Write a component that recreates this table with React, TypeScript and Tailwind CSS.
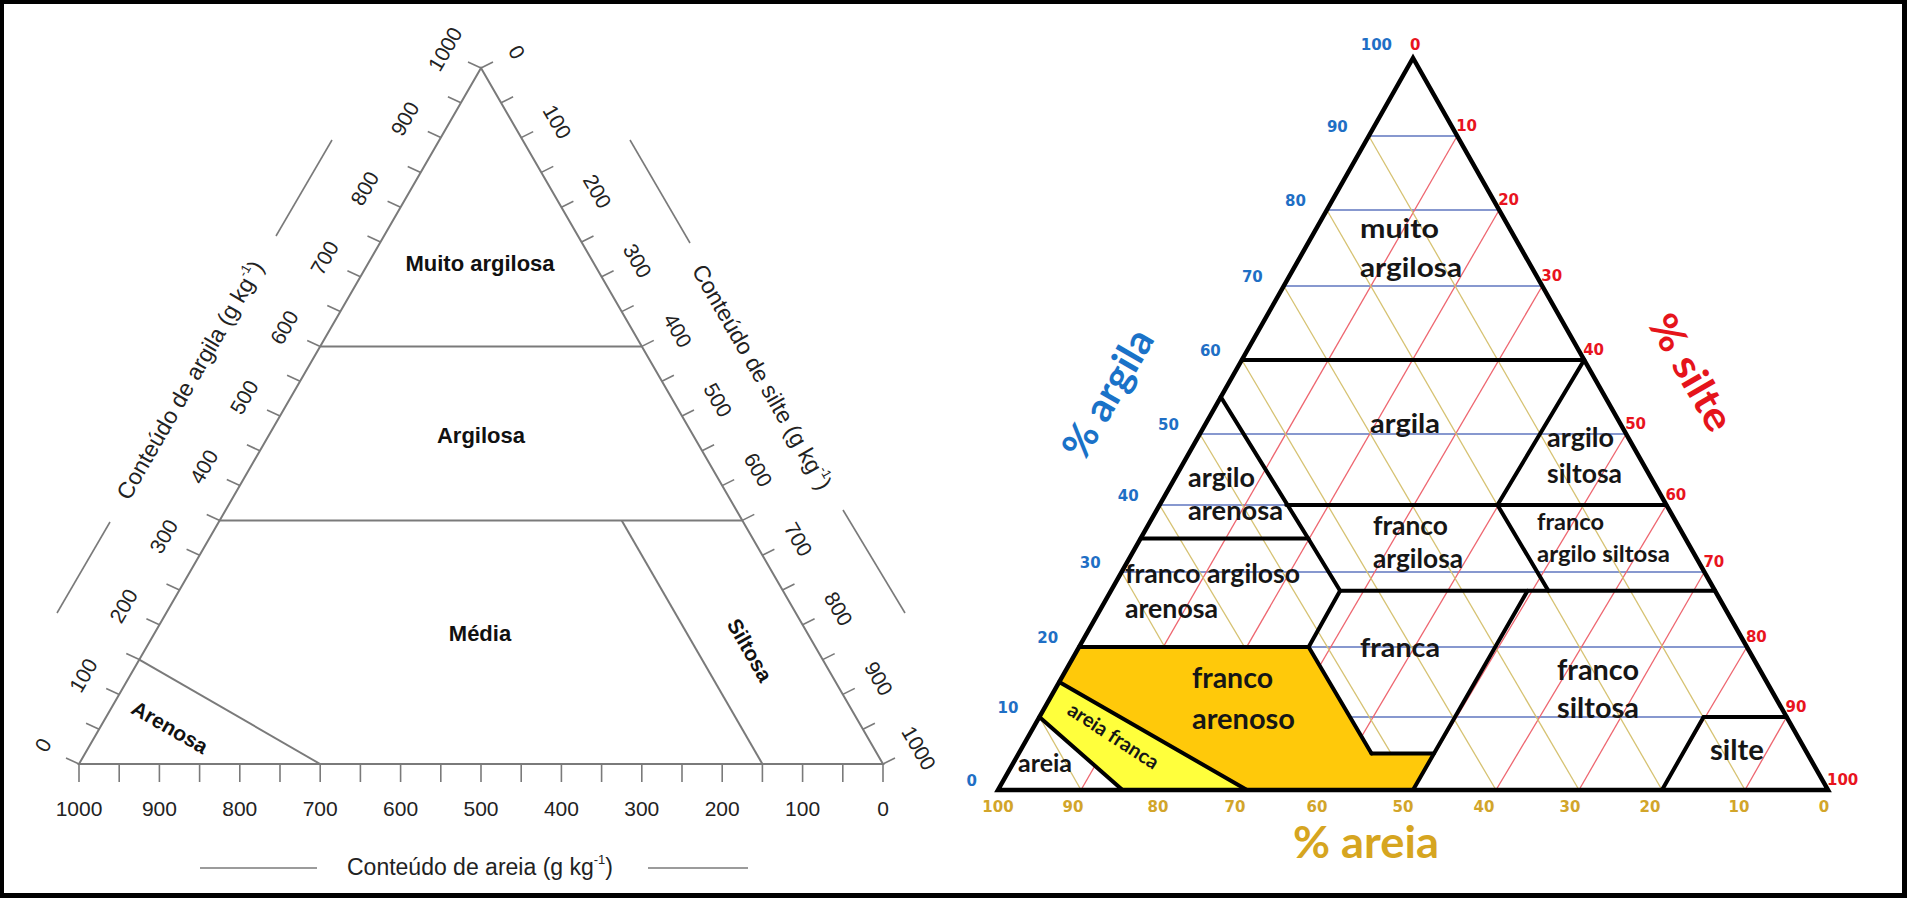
type Pt = [number, number];

// ---------- left chart (g/kg) ----------
const leftSide = (v: number): Pt => [79 + v * 0.402, 764 - v * 0.696];
const rightSide = (v: number): Pt => [481 + v * 0.402, 68 + v * 0.696];
const baseX = (v: number) => 883 - v * 0.804;

const steps = Array.from({ length: 21 }, (_, i) => i * 50);
const hundreds = Array.from({ length: 11 }, (_, i) => i * 100);

const grey = '#7a7a7a';
const sans = '"Liberation Sans", Arial, sans-serif';

function LeftChart() {
  return (
    <svg viewBox="4 4 949 889" className="w-[949px] h-[889px] shrink-0" fontFamily={sans}>
      {/* frame */}
      <polygon points="79,764 481,68 883,764" fill="none" stroke={grey} strokeWidth={2} />

      {/* ticks */}
      {steps.map((v) => {
        const [x, y] = leftSide(v);
        return <line key={'lt' + v} x1={x} y1={y} x2={x - 13} y2={y - 6} stroke={grey} strokeWidth={1.6} />;
      })}
      {steps.map((v) => {
        const [x, y] = rightSide(v);
        return <line key={'rt' + v} x1={x} y1={y} x2={x + 12} y2={y - 6} stroke={grey} strokeWidth={1.6} />;
      })}
      {steps.map((v) => (
        <line key={'bt' + v} x1={baseX(v)} y1={764} x2={baseX(v)} y2={782} stroke={grey} strokeWidth={1.6} />
      ))}

      {/* class boundaries */}
      <line x1={320.2} y1={346.4} x2={641.8} y2={346.4} stroke={grey} strokeWidth={2} />
      <line x1={219.7} y1={520.4} x2={742.3} y2={520.4} stroke={grey} strokeWidth={2} />
      <line x1={621.7} y1={520.4} x2={762.4} y2={764} stroke={grey} strokeWidth={2} />
      <line x1={139.3} y1={659.6} x2={320.2} y2={764} stroke={grey} strokeWidth={2} />

      {/* axis numbers */}
      {hundreds.map((v) => {
        const [x, y] = leftSide(v);
        const cx = x - 36;
        const cy = y - 19;
        return (
          <text key={'ln' + v} x={cx} y={cy} fontSize={21} fill="#222" textAnchor="middle" dominantBaseline="central" transform={`rotate(-60 ${cx} ${cy})`}>
            {v}
          </text>
        );
      })}
      {hundreds.map((v) => {
        const [x, y] = rightSide(v);
        const cx = x + 36;
        const cy = y - 16;
        return (
          <text key={'rn' + v} x={cx} y={cy} fontSize={21} fill="#222" textAnchor="middle" dominantBaseline="central" transform={`rotate(60 ${cx} ${cy})`}>
            {v}
          </text>
        );
      })}
      {hundreds.map((v) => (
        <text key={'bn' + v} x={baseX(v)} y={808} fontSize={21} fill="#222" textAnchor="middle" dominantBaseline="central">
          {v}
        </text>
      ))}

      {/* axis titles */}
      <text x={190} y={380} fontSize={23} fill="#222" textAnchor="middle" dominantBaseline="central" transform="rotate(-60 190 380)">
        Conteúdo de argila (g kg<tspan fontSize={13} dy={-8}>-1</tspan><tspan dy={8}>)</tspan>
      </text>
      <text x={762} y={377} fontSize={23} fill="#222" textAnchor="middle" dominantBaseline="central" transform="rotate(60 762 377)">
        Conteúdo de silte (g kg<tspan fontSize={13} dy={-8}>-1</tspan><tspan dy={8}>)</tspan>
      </text>
      <text x={480} y={867} fontSize={23} fill="#222" textAnchor="middle" dominantBaseline="central">
        Conteúdo de areia (g kg<tspan fontSize={13} dy={-8}>-1</tspan><tspan dy={8}>)</tspan>
      </text>

      {/* decorative dashes next to titles */}
      <line x1={276} y1={236} x2={332} y2={140} stroke={grey} strokeWidth={1.6} />
      <line x1={57} y1={613} x2={110} y2={522} stroke={grey} strokeWidth={1.6} />
      <line x1={630} y1={140} x2={690} y2={243} stroke={grey} strokeWidth={1.6} />
      <line x1={843} y1={510} x2={905} y2={613} stroke={grey} strokeWidth={1.6} />
      <line x1={200} y1={868} x2={317} y2={868} stroke={grey} strokeWidth={1.6} />
      <line x1={648} y1={868} x2={748} y2={868} stroke={grey} strokeWidth={1.6} />

      {/* class names */}
      <g fontWeight={700} fontSize={22} fill="#111" textAnchor="middle" dominantBaseline="central">
        <text x={480} y={263}>Muito argilosa</text>
        <text x={481} y={435}>Argilosa</text>
        <text x={480} y={633}>Média</text>
        <text x={750} y={650} fontSize={21} transform="rotate(60 750 650)">Siltosa</text>
        <text x={170} y={727} fontSize={21} transform="rotate(30 170 727)">Arenosa</text>
      </g>
    </svg>
  );
}

// ---------- right chart (%) ----------
const yTable = [790, 717, 647, 572, 505, 434, 360, 286, 210, 136, 58];
const Y = (c: number) => {
  const i = Math.min(9, Math.floor(c / 10));
  const f = (c - i * 10) / 10;
  return yTable[i] + (yTable[i + 1] - yTable[i]) * f;
};
const xLeft = (y: number) => 998 + (790 - y) * 0.567;
const xRight = (y: number) => 1828 - (790 - y) * 0.567;
// clay %, silt %
const P = (clay: number, silt: number): Pt => {
  const y = Y(clay);
  if (clay >= 100) return [1413, y];
  const xl = xLeft(y);
  const xr = xRight(y);
  return [xl + (silt / (100 - clay)) * (xr - xl), y];
};
const pts = (list: Pt[]) => list.map((p) => p.join(',')).join(' ');

const tens = [10, 20, 30, 40, 50, 60, 70, 80, 90];
const calibri = 'Lato, "Open Sans", sans-serif';
const numFont = '"DejaVu Sans", Verdana, sans-serif';

const borders: [Pt, Pt][] = [
  [P(60, 0), P(60, 40)],
  [P(55, 0), P(35, 20)],
  [P(35, 0), P(35, 20)],
  [P(40, 15), P(40, 60)],
  [P(60, 40), P(40, 40)],
  [P(35, 20), P(27.5, 27.5)],
  [P(27.5, 27.5), P(27.5, 72.5)],
  [P(40, 40), P(27.5, 52.5)],
  [P(27.5, 27.5), P(20, 27.5)],
  [P(20, 0), P(20, 27.5)],
  [P(20, 27.5), P(5, 42.5)],
  [P(5, 42.5), P(5, 50)],
  [P(27.5, 50), P(0, 50)],
  [P(10, 80), P(10, 90)],
  [P(10, 80), P(0, 80)],
  [P(15, 0), P(0, 30)],
  [P(10, 0), P(0, 15)],
];

const labels: { t: string; x: number; y: number; w: number; s: number }[] = [
  { t: 'muito', x: 1360, y: 238, w: 79, s: 27 },
  { t: 'argilosa', x: 1360, y: 277, w: 102, s: 27 },
  { t: 'argila', x: 1370, y: 433, w: 70, s: 27 },
  { t: 'argilo', x: 1188, y: 487, w: 67, s: 27 },
  { t: 'arenosa', x: 1188, y: 520, w: 95, s: 27 },
  { t: 'franco argiloso', x: 1125, y: 583, w: 175, s: 27 },
  { t: 'arenosa', x: 1125, y: 618, w: 93, s: 27 },
  { t: 'franco', x: 1373, y: 535, w: 75, s: 27 },
  { t: 'argilosa', x: 1373, y: 568, w: 90, s: 27 },
  { t: 'argilo', x: 1547, y: 447, w: 67, s: 27 },
  { t: 'siltosa', x: 1547, y: 483, w: 75, s: 27 },
  { t: 'franco', x: 1537, y: 530, w: 67, s: 23 },
  { t: 'argilo siltosa', x: 1537, y: 562, w: 133, s: 23 },
  { t: 'franca', x: 1360, y: 657, w: 80, s: 27 },
  { t: 'franco', x: 1192, y: 688, w: 81, s: 29 },
  { t: 'arenoso', x: 1192, y: 729, w: 103, s: 29 },
  { t: 'franco', x: 1557, y: 680, w: 82, s: 29 },
  { t: 'siltosa', x: 1557, y: 718, w: 82, s: 29 },
  { t: 'silte', x: 1710, y: 760, w: 54, s: 28 },
  { t: 'areia', x: 1018, y: 772, w: 54, s: 24 },
];

const sandLabelX = [1824, 1739, 1650, 1570, 1484, 1403, 1317, 1235, 1158, 1073, 998];

function RightChart() {
  const apex: Pt = [1413, 58];
  const bl: Pt = [998, 790];
  const br: Pt = [1828, 790];
  return (
    <svg viewBox="953 4 949 889" className="w-[949px] h-[889px] shrink-0">
      {/* grid */}
      {tens.map((c) => {
        const [a, b] = [P(c, 0), P(c, 100 - c)];
        return <line key={'gb' + c} x1={a[0]} y1={a[1]} x2={b[0]} y2={b[1]} stroke="#5f76bf" strokeWidth={1.3} />;
      })}
      {tens.map((t) => {
        const [a, b] = [P(0, t), P(100 - t, t)];
        return <line key={'gr' + t} x1={a[0]} y1={a[1]} x2={b[0]} y2={b[1]} stroke="#ee6670" strokeWidth={1.3} />;
      })}
      {tens.map((s) => {
        const [a, b] = [P(0, 100 - s), P(100 - s, 0)];
        return <line key={'gy' + s} x1={a[0]} y1={a[1]} x2={b[0]} y2={b[1]} stroke="#d6c272" strokeWidth={1.3} />;
      })}

      {/* filled classes */}
      <polygon
        points={pts([P(20, 0), P(20, 27.5), P(5, 42.5), P(5, 50), P(0, 50), P(0, 30), P(15, 0)])}
        fill="#ffc90a"
      />
      <polygon points={pts([P(15, 0), P(0, 30), P(0, 15), P(10, 0)])} fill="#ffff3c" />

      {/* boundaries */}
      {borders.map(([a, b], i) => (
        <line key={'bd' + i} x1={a[0]} y1={a[1]} x2={b[0]} y2={b[1]} stroke="#000" strokeWidth={4} strokeLinecap="round" />
      ))}
      <polygon points={pts([apex, bl, br])} fill="none" stroke="#000" strokeWidth={4.5} strokeLinejoin="miter" />

      {/* class names */}
      <g fontFamily={calibri} fontWeight={700} fill="#161616">
        {labels.map((l, i) => (
          <text key={'lb' + i} x={l.x} y={l.y} fontSize={l.s} textLength={l.w} lengthAdjust="spacingAndGlyphs">
            {l.t}
          </text>
        ))}
        <text x={1114} y={735} fontSize={20} textAnchor="middle" dominantBaseline="central" transform="rotate(33 1114 735)">
          areia franca
        </text>
      </g>

      {/* scale numbers */}
      <g fontFamily={numFont} fontWeight={700} fontSize={15}>
        {[0, ...tens, 100].map((c) => {
          const y = Y(c);
          return (
            <text key={'cl' + c} x={xLeft(y) - 21} y={c === 100 ? 50 : y - 4} fill="#1f6fc5" textAnchor="end">
              {c}
            </text>
          );
        })}
        {[0, ...tens, 100].map((t) => {
          const y = Y(100 - t);
          return (
            <text key={'sl' + t} x={t === 0 ? 1410 : xRight(y) - 1} y={t === 0 ? 50 : y - 5} fill="#e8141e">
              {t}
            </text>
          );
        })}
        {sandLabelX.map((x, i) => (
          <text key={'sd' + i} x={x} y={812} fill="#d2a52a" textAnchor="middle">
            {i * 10}
          </text>
        ))}
      </g>

      {/* axis titles */}
      <g fontFamily={calibri} fontWeight={700}>
        <text x={1107} y={393} fontSize={40} fill="#1a72c8" textAnchor="middle" dominantBaseline="central" textLength={142} lengthAdjust="spacingAndGlyphs" transform="rotate(-60 1107 393)">
          % argila
        </text>
        <text x={1692} y={372} fontSize={40} fill="#e5141b" textAnchor="middle" dominantBaseline="central" textLength={128} lengthAdjust="spacingAndGlyphs" transform="rotate(60 1692 372)">
          % silte
        </text>
        <text x={1293} y={858} fontSize={44} fill="#d6a520" textLength={146} lengthAdjust="spacingAndGlyphs">
          % areia
        </text>
      </g>
    </svg>
  );
}

export default function App() {
  return (
    <div className="w-[1907px] h-[898px] box-border flex bg-white border-black border-t-4 border-l-4 border-r-[5px] border-b-[5px] overflow-hidden">
      <LeftChart />
      <RightChart />
    </div>
  );
}
